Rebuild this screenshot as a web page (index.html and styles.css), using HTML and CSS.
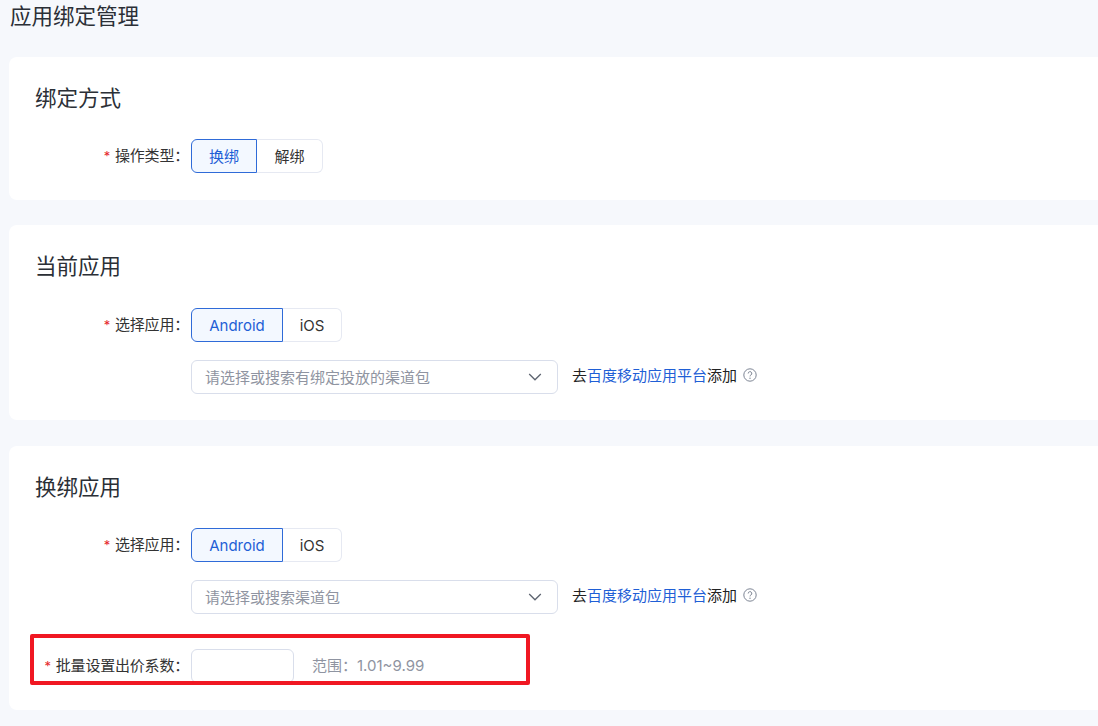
FILE: index.html
```html
<!DOCTYPE html>
<html lang="zh-CN">
<head>
<meta charset="utf-8">
<title>应用绑定管理</title>
<link rel="stylesheet" href="styles.css">
</head>
<body>
<main class="page">
  <h1 class="page-title">应用绑定管理</h1>

  <section class="card card-first">
    <h2 class="card-title">绑定方式</h2>
    <div class="row">
      <label class="label"><span class="req">*</span>操作类型：</label>
      <div class="seg">
        <button class="seg-btn seg-on seg-type">换绑</button>
        <button class="seg-btn seg-type">解绑</button>
      </div>
    </div>
  </section>

  <section class="card card-second">
    <h2 class="card-title title-low">当前应用</h2>
    <div class="row">
      <label class="label"><span class="req">*</span>选择应用：</label>
      <div class="seg">
        <button class="seg-btn seg-on seg-android">Android</button>
        <button class="seg-btn seg-ios">iOS</button>
      </div>
    </div>
    <div class="row row-select">
      <span class="label"></span>
      <div class="select">
        <span class="placeholder">请选择或搜索有绑定投放的渠道包</span>
        <svg class="chevron" viewBox="0 0 14 8" width="14" height="8"><path d="M1.2 1l5.8 5.8L12.8 1" fill="none" stroke="#5d6470" stroke-width="1.3"/></svg>
      </div>
      <div class="hint">去<a class="link">百度移动应用平台</a>添加
        <svg class="help" viewBox="0 0 14 14" width="14" height="14"><circle cx="7" cy="7" r="6.2" fill="none" stroke="#7d8594" stroke-width="1"/><path d="M5.2 5.5a1.8 1.8 0 1 1 2.7 1.5c-.6.4-.9.7-.9 1.4" fill="none" stroke="#7d8594" stroke-width="1"/><circle cx="7" cy="10.3" r=".7" fill="#7d8594"/></svg>
      </div>
    </div>
  </section>

  <section class="card card-third">
    <h2 class="card-title">换绑应用</h2>
    <div class="row">
      <label class="label"><span class="req">*</span>选择应用：</label>
      <div class="seg">
        <button class="seg-btn seg-on seg-android">Android</button>
        <button class="seg-btn seg-ios">iOS</button>
      </div>
    </div>
    <div class="row row-select">
      <span class="label"></span>
      <div class="select">
        <span class="placeholder">请选择或搜索渠道包</span>
        <svg class="chevron" viewBox="0 0 14 8" width="14" height="8"><path d="M1.2 1l5.8 5.8L12.8 1" fill="none" stroke="#5d6470" stroke-width="1.3"/></svg>
      </div>
      <div class="hint">去<a class="link">百度移动应用平台</a>添加
        <svg class="help" viewBox="0 0 14 14" width="14" height="14"><circle cx="7" cy="7" r="6.2" fill="none" stroke="#7d8594" stroke-width="1"/><path d="M5.2 5.5a1.8 1.8 0 1 1 2.7 1.5c-.6.4-.9.7-.9 1.4" fill="none" stroke="#7d8594" stroke-width="1"/><circle cx="7" cy="10.3" r=".7" fill="#7d8594"/></svg>
      </div>
    </div>
    <div class="row row-input">
      <label class="label"><span class="req">*</span>批量设置出价系数：</label>
      <div class="input"></div>
      <span class="range">范围：1.01~9.99</span>
    </div>
    <div class="highlight"></div>
  </section>
</main>
</body>
</html>
```
FILE: styles.css
```css
* { box-sizing: border-box; }
html, body { margin: 0; height: 100%; overflow: hidden; }
body {
  background: #f6f8fc;
  color: #333;
  font-family: Inter, "Noto Sans CJK SC", sans-serif;
  font-size: 15px;
}
.page { padding-left: 9px; margin-right: -20px; }
.page-title {
  margin: 0;
  height: 57px;
  padding: 1px 0 0 1px;
  font-size: 21.5px;
  line-height: 30px;
  font-weight: 400;
  color: #2b2f36;
}
.card {
  position: relative;
  background: #fff;
  border-radius: 8px;
  padding: 26px 27px 27px 26px;
  margin-bottom: 26px;
}
.card-first { height: 143px; margin-bottom: 25px; }
.card-second { height: 195px; }
.card-third { height: 264px; }
.card-title {
  margin: 0 0 26px;
  font-size: 21.5px;
  line-height: 30px;
  font-weight: 400;
  color: #2b2f36;
}
.title-low { margin-bottom: 27px; }
.row { display: flex; align-items: center; height: 34px; }
.row-select { margin-top: 18px; }
.row-input { margin-top: 35px; align-items: flex-start; }
.label {
  width: 156px;
  flex: none;
  padding: 0 2px 0 0;
  text-align: right;
  white-space: nowrap;
  line-height: 34px;
  letter-spacing: -.2px;
}
.req { color: #e5262a; margin-right: 5px; font-size: 13px; }
.seg { display: flex; }
.seg-btn {
  height: 34px;
  padding: 0 0 2px;
  font: inherit;
  color: #333;
  background: #fff;
  border: 1px solid #e6e9f2;
  border-left: 0;
  border-radius: 0 6px 6px 0;
}
.seg-on {
  color: #1f5fd6;
  background: #f3f8ff;
  border: 1px solid #2f6bd8;
  border-radius: 6px 0 0 6px;
}
.seg-type { width: 66px; }
.seg-android { width: 92px; padding-bottom: 0; }
.seg-ios { width: 59px; padding-bottom: 0; }
.select {
  width: 367px;
  height: 34px;
  flex: none;
  display: flex;
  align-items: center;
  justify-content: space-between;
  padding: 0 15px 0 13px;
  color: #8f94a1;
  background: #fff;
  border: 1px solid #d9deeb;
  border-radius: 6px;
}
.placeholder { margin-bottom: 2px; }
.hint {
  display: flex;
  align-items: center;
  margin-left: 14px;
  margin-top: -6px;
  font-size: 15px;
  color: #222;
  white-space: nowrap;
}
.link { color: #1f5fd6; }
.help { margin: 2px 0 0 6px; }
.input {
  width: 103px;
  height: 34px;
  flex: none;
  background: #fff;
  border: 1px solid #d9deeb;
  border-radius: 6px;
}
.range {
  margin-left: 18px;
  line-height: 34px;
  color: #8f94a1;
  white-space: nowrap;
}
.highlight {
  position: absolute;
  left: 21px;
  top: 188px;
  width: 500px;
  height: 51px;
  border: 4px solid #f01722;
  border-radius: 2px;
}
```
